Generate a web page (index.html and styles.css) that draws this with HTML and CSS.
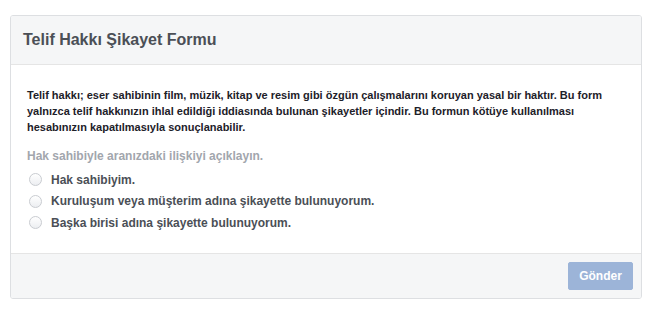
FILE: index.html
```html
<!DOCTYPE html>
<html lang="tr">
<head>
<meta charset="utf-8">
<title>Telif Hakkı Şikayet Formu</title>
<link rel="stylesheet" href="styles.css">
</head>
<body>
<div class="dialog">
  <div class="dialog-header">
    <h1 class="dialog-title">Telif Hakkı Şikayet Formu</h1>
  </div>
  <div class="dialog-body">
    <p class="intro">Telif hakkı; eser sahibinin film, müzik, kitap ve resim gibi özgün çalışmalarını koruyan yasal bir haktır. Bu form yalnızca telif hakkınızın ihlal edildiği iddiasında bulunan şikayetler içindir. Bu formun kötüye kullanılması hesabınızın kapatılmasıyla sonuçlanabilir.</p>
    <div class="question">Hak sahibiyle aranızdaki ilişkiyi açıklayın.</div>
    <ul class="options">
      <li class="option"><span class="radio"></span><span class="option-label">Hak sahibiyim.</span></li>
      <li class="option"><span class="radio"></span><span class="option-label">Kuruluşum veya müşterim adına şikayette bulunuyorum.</span></li>
      <li class="option"><span class="radio"></span><span class="option-label">Başka birisi adına şikayette bulunuyorum.</span></li>
    </ul>
  </div>
  <div class="dialog-footer">
    <button class="btn-submit" type="button">Gönder</button>
  </div>
</div>
</body>
</html>
```
FILE: styles.css
```css
html, body {
  margin: 0;
  padding: 0;
  background: #ffffff;
}
body {
  padding: 15px 9px 0 10px;
  font-family: "Liberation Sans", Arial, sans-serif;
  color: #1d2129;
}
.dialog {
  border: 1px solid #dddfe2;
  border-radius: 3px;
  overflow: hidden;
  background: #fff;
}
.dialog-header {
  background: #f5f6f7;
  border-bottom: 1px solid #e5e5e5;
  height: 48px;
  display: flex;
  align-items: center;
  padding: 0 12px;
}
.dialog-title {
  margin: 0;
  font-size: 16px;
  font-weight: bold;
  color: #4b4f56;
  line-height: 20px;
  padding-bottom: 1px;
}
.dialog-body {
  padding: 22px 16px 16px 16px;
  height: 150px;
}
.intro {
  margin: 0;
  font-size: 11px;
  font-weight: bold;
  line-height: 16px;
  color: #1d2129;
}
.question {
  margin-top: 13px;
  font-size: 12px;
  font-weight: bold;
  color: #a2a6ad;
  line-height: 16px;
}
.options {
  list-style: none;
  margin: 5px 0 0 0;
  padding: 0;
}
.option {
  display: flex;
  align-items: center;
  height: 21.5px;
}
.radio {
  width: 13px;
  height: 13px;
  box-sizing: border-box;
  border-radius: 50%;
  border: 1px solid #c9ccd1;
  background: linear-gradient(#ffffff, #eceef1);
  margin-left: 2px;
  margin-right: 9px;
  flex: none;
}
.option-label {
  font-size: 12px;
  font-weight: bold;
  color: #4b4f56;
}
.dialog-footer {
  background: #f5f6f7;
  border-top: 1px solid #e5e5e5;
  display: flex;
  justify-content: flex-end;
  padding: 8px 8px 8px 12px;
}
.btn-submit {
  font-family: "Liberation Sans", Arial, sans-serif;
  font-size: 12px;
  font-weight: bold;
  color: #ffffff;
  background: #9cb4d8;
  border: 1px solid #9cb4d8;
  border-radius: 2px;
  width: 65px;
  height: 28px;
  padding: 0;
}
```
